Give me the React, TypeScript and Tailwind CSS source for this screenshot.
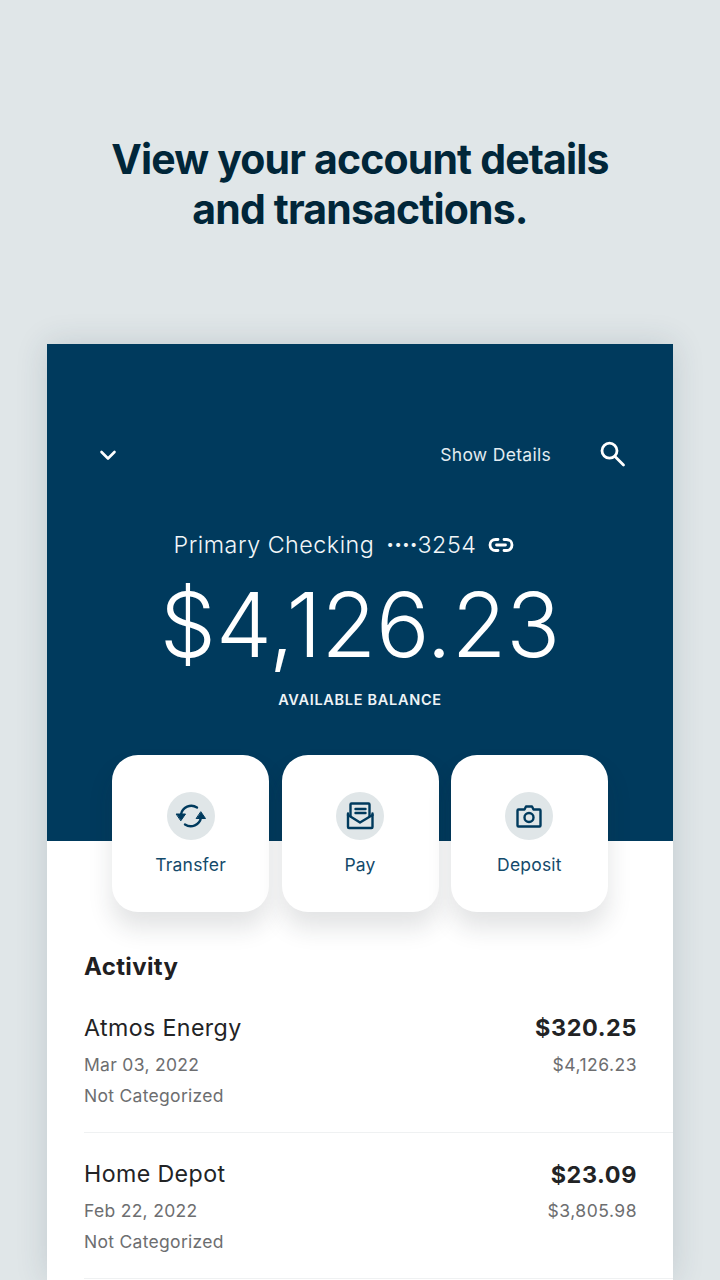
import React from "react";

const Tile = ({ label, children }: { label: string; children: React.ReactNode }) => (
  <div className="w-[157px] h-[157px] rounded-[26px] bg-white shadow-[0_16px_24px_rgba(30,40,50,0.13)] flex flex-col items-center pt-[37px]">
    <div className="w-12 h-12 rounded-full bg-[#e0e6e8] flex items-center justify-center">{children}</div>
    <div className="mt-[13px] text-[17.5px] leading-[24px] text-[#134a6b] tracking-[0.2px]">{label}</div>
  </div>
);

const Row = ({ name, amount, date, bal }: { name: string; amount: string; date: string; bal: string }) => (
  <div className="pr-9 pt-[27px] h-[146.5px] border-b border-[#eff1f2]">
    <div className="flex justify-between items-center h-[30px]">
      <span className="text-[23.2px] text-[#222325] tracking-[0.4px]">{name}</span>
      <span className="text-[23.4px] font-bold text-[#222325] tracking-[0.6px]">{amount}</span>
    </div>
    <div className="flex justify-between items-center mt-[10px] h-[24px] text-[17.5px] text-[#6d6e70] tracking-[0.3px]">
      <span>{date}</span>
      <span className="tracking-[0.5px]">{bal}</span>
    </div>
    <div className="mt-[7px] h-[24px] flex items-center text-[17.5px] text-[#6d6e70] tracking-[0.3px]">Not Categorized</div>
  </div>
);

export default function App() {
  return (
    <div className="h-[1280px] w-[720px] overflow-hidden bg-[#e0e6e8] font-['Inter',sans-serif] flex flex-col items-center">
      <h1 className="mt-[134px] text-center text-[41px] leading-[50px] font-bold text-[#012639] tracking-[-0.85px]">
        View your account details
        <br />
        and transactions.
      </h1>
      <div className="mt-[110px] w-[626px] flex-1 bg-white shadow-[0_0_30px_rgba(40,60,80,0.16)]">
        <div className="h-[497px] bg-[#003a5d] text-white">
          <div className="flex justify-between items-center pt-[88px] pl-[52px] pr-[47px] h-[134px]">
            <svg width="18" height="18" viewBox="0 0 18 18" fill="none" stroke="white" strokeWidth="2.6" strokeLinecap="round" strokeLinejoin="round">
              <path d="M2.5 6l6.5 6.5L15.500 6" />
            </svg>
            <div className="flex items-center">
              <span className="text-[17.5px] tracking-[0.3px] text-[#e3ecf1]">Show Details</span>
              <svg className="ml-[47px]" width="28" height="28" viewBox="0 0 28 28" fill="none" stroke="white" strokeWidth="2.8" strokeLinecap="round">
                <circle cx="11.5" cy="9.7" r="7.5" />
                <path d="M17 15.500l8.500 8.500" />
              </svg>
            </div>
          </div>
          <div className="mt-[50px] mr-[31px] flex items-center justify-center h-[34px] text-[23.3px] font-light tracking-[0.5px] text-[#f2f6f8]">
            <span>Primary Checking</span>
            <span className="ml-[12px]"><span className="font-bold tracking-[0px]">····</span>3254</span>
            <svg className="ml-[11px]" width="28" height="28" viewBox="0 0 28 28" fill="none" stroke="white" strokeWidth="2.8" strokeLinecap="round">
              <path d="M11 8.500H8.500a5.500 5.500 0 0 0 0 11H11M17 8.500h2.500a5.500 5.500 0 0 1 0 11H17M9.500 14h9" />
            </svg>
          </div>
          <div className="mt-[13px] text-center text-[89px] leading-[100px] font-[260] text-white tracking-[0px]">$4,126.23</div>
          <div className="mt-[15px] text-center text-[14.5px] leading-[20px] font-semibold tracking-[0.7px] text-[#eef3f6]">AVAILABLE BALANCE</div>
        </div>
        <div className="-mt-[86px] flex justify-center gap-[12.4px] relative">
          <Tile label="Transfer">
            <svg width="32" height="32" viewBox="0 0 32 32" fill="none" stroke="#003a5d" strokeWidth="2.4" strokeLinecap="round">
              <path d="M6 14.500A10.500 10.500 0 0 1 22 7.500" />
              <path d="M26 17.500A10.500 10.500 0 0 1 10 24.500" />
              <path d="M1.500 14H10.500L6 20.500z" fill="#003a5d" strokeWidth="1" strokeLinejoin="round" />
              <path d="M21.500 18.500H30.500L26 12z" fill="#003a5d" strokeWidth="1" strokeLinejoin="round" />
            </svg>
          </Tile>
          <Tile label="Pay">
            <svg width="30" height="30" viewBox="0 0 30 30" fill="none" stroke="#003a5d" strokeWidth="2.4" strokeLinejoin="round" strokeLinecap="round">
              <path d="M5.500 15V3.500a1 1 0 0 1 1-1h17a1 1 0 0 1 1 1V15" />
              <path d="M3 12.500v13.500a1 1 0 0 0 1 1h22.500a1 1 0 0 0 1-1V12.500" />
              <path d="M3 14l12 7.500L27.500 14" />
              <path d="M10.500 8h10M10.500 12h10" />
            </svg>
          </Tile>
          <Tile label="Deposit">
            <svg width="28" height="28" viewBox="0 0 28 28" fill="none" stroke="#003a5d" strokeWidth="2.4" strokeLinejoin="round">
              <path d="M3.500 7.500H9.500l1.500-3h6l1.500 3h6A1 1 0 0 1 25.500 8.500v15a1 1 0 0 1-1 1h-21a1 1 0 0 1-1-1v-15A1 1 0 0 1 3.500 7.500z" />
              <circle cx="14" cy="15.500" r="4.500" />
            </svg>
          </Tile>
        </div>
        <div className="pl-[37px] pt-[39px]">
          <div className="text-[24px] leading-[32px] font-bold text-[#1f2022] tracking-[0.35px]">Activity</div>
          <div className="mt-[3px]">
            <Row name="Atmos Energy" amount="$320.25" date="Mar 03, 2022" bal="$4,126.23" />
            <Row name="Home Depot" amount="$23.09" date="Feb 22, 2022" bal="$3,805.98" />
          </div>
        </div>
      </div>
    </div>
  );
}
